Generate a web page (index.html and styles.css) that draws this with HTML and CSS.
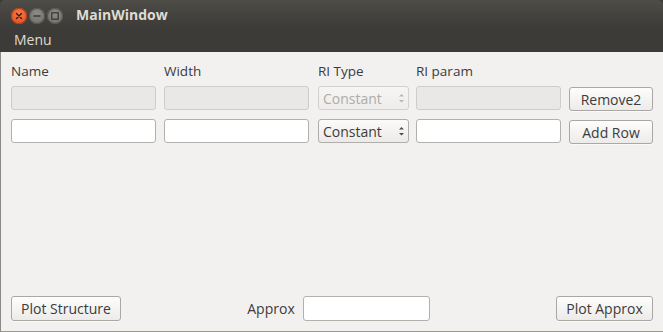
FILE: index.html
```html
<!DOCTYPE html>
<html>
<head>
<meta charset="utf-8">
<link rel="stylesheet" href="styles.css">
</head>
<body>
<div class="window">
  <div class="titlebar">
    <div class="wbtns">
      <span class="wbtn close"><svg width="16" height="16" viewBox="0 0 16 16"><path d="M5.5 5.5 L10.5 10.5 M10.5 5.5 L5.5 10.5" stroke="#3a1a0e" stroke-width="1.4" stroke-linecap="round"/></svg></span>
      <span class="wbtn"><svg width="16" height="16" viewBox="0 0 16 16"><path d="M4.5 8 H11.5" stroke="#3c3b37" stroke-width="1.5"/></svg></span>
      <span class="wbtn"><svg width="16" height="16" viewBox="0 0 16 16"><rect x="4.8" y="4.8" width="6.4" height="6.4" fill="none" stroke="#3c3b37" stroke-width="1.3"/></svg></span>
    </div>
    <span class="title">MainWindow</span>
  </div>
  <div class="menubar"><span class="menu">Menu</span></div>
  <div class="content">
    <div class="grid">
      <div class="lbl">Name</div>
      <div class="lbl">Width</div>
      <div class="lbl">RI Type</div>
      <div class="lbl">RI param</div>
      <div></div>

      <div><div class="input wide disabled"></div></div>
      <div><div class="input wide disabled"></div></div>
      <div><div class="combo disabled"><span>Constant</span><span class="arrows"><svg width="7" height="12" viewBox="0 0 7 12"><path d="M1 4.5 L3.5 2 L6 4.5Z M1 8 L3.5 10.5 L6 8Z" fill="#b9b7b4"/></svg></span></div></div>
      <div><div class="input wide disabled"></div></div>
      <div><button class="btn row-btn">Remove2</button></div>

      <div><div class="input wide"></div></div>
      <div><div class="input wide"></div></div>
      <div><div class="combo"><span>Constant</span><span class="arrows"><svg width="7" height="12" viewBox="0 0 7 12"><path d="M1 4.5 L3.5 2 L6 4.5Z M1 8 L3.5 10.5 L6 8Z" fill="#4c4c4c"/></svg></span></div></div>
      <div><div class="input wide"></div></div>
      <div><button class="btn row-btn">Add Row</button></div>
    </div>
    <div class="spacer"></div>
    <div class="bottom">
      <button class="btn plot-structure">Plot Structure</button>
      <div class="approx">
        <span class="approx-lbl">Approx</span>
        <div class="input approx-input"></div>
      </div>
      <button class="btn plot-approx">Plot Approx</button>
    </div>
  </div>
</div>
</body>
</html>
```

FILE: styles.css
```css
html, body {
  margin: 0;
  padding: 0;
  background: #3c3b37;
}
body {
  width: 663px;
  height: 332px;
  overflow: hidden;
  font-family: "Open Sans", "DejaVu Sans", sans-serif;
}
.window {
  width: 663px;
  height: 332px;
  display: flex;
  flex-direction: column;
  background: #3c3b37;
  border-radius: 5px 5px 0 0;
  overflow: hidden;
}
.titlebar {
  height: 30px;
  display: flex;
  align-items: center;
  background: linear-gradient(#4f4d48 0%, #43423e 50%, #3c3b37 100%);
  padding-left: 11px;
}
.wbtns {
  display: flex;
  gap: 2px;
  margin-top: 1px;
}
.wbtn {
  width: 16px;
  height: 16px;
  border-radius: 50%;
  background: radial-gradient(circle at 50% 35%, #8c8b86, #6c6b66);
  box-shadow: inset 0 0 0 1px #55544f;
  display: block;
}
.wbtn svg { display: block; }
.wbtn.close {
  background: radial-gradient(circle at 50% 35%, #f57a4d, #df4a17);
  box-shadow: inset 0 0 0 1px #b83d12;
}
.title {
  margin-left: 13px;
  color: #dfdbd2;
  font-weight: bold;
  font-size: 14px;
  margin-top: -2px;
}
.menubar {
  height: 22px;
  display: flex;
  align-items: center;
  padding-left: 14px;
}
.menu {
  color: #dfdbd2;
  font-size: 14px;
  margin-top: -3px;
}
.content {
  flex: 1;
  background: #f2f1f0;
  border-left: 1px solid #8b8a86;
  border-bottom: 1px solid #9a9994;
  display: flex;
  flex-direction: column;
  padding: 8px 0 9px 10px;
  color: #3c3c3c;
  font-size: 13px;
}
.grid {
  display: grid;
  grid-template-columns: 153px 154px 98px 153px 84px;
  grid-template-rows: 26px 33px 24px;
  align-items: start;
}
.lbl {
  font-size: 13.5px;
  color: #3c3c3c;
  line-height: 22px;
}
.input {
  height: 22px;
  border: 1px solid #b3b1ae;
  border-radius: 3px;
  background: #ffffff;
  box-sizing: content-box;
}
.input.wide { width: 143px; }
.input.disabled {
  background: #e9e8e7;
  border-color: #cfcdca;
}
.combo {
  height: 22px;
  border: 1px solid #b0aeab;
  border-radius: 3px;
  background: linear-gradient(#fbfbfa, #eceae8);
  display: flex;
  align-items: center;
  justify-content: space-between;
  padding: 0 0 0 4px;
  box-sizing: content-box;
  font-size: 14px;
  color: #3c3c3c;
  width: 85px;
}
.combo .arrows {
  width: 14px;
  display: flex;
  justify-content: center;
}
.combo .arrows svg { display: block; }
.combo.disabled {
  color: #aeaca9;
  border-color: #d3d1ce;
  background: linear-gradient(#f6f5f4, #eeedeb);
}
.btn {
  font-family: "Open Sans", "DejaVu Sans", sans-serif;
  font-size: 14px;
  color: #3c3c3c;
  height: 24px;
  border: 1px solid #aaa8a5;
  border-radius: 3px;
  background: linear-gradient(#fdfdfc, #ecebe9);
  padding: 0;
  box-sizing: border-box;
  display: flex;
  align-items: center;
  justify-content: center;
  box-shadow: 0 1px 0 rgba(255,255,255,0.6);
}
.row-btn {
  width: 84px;
  margin-top: 1px;
}
.spacer { flex: 1; }
.bottom {
  display: grid;
  grid-template-columns: 110px 1fr auto 1fr 97px;
  align-items: center;
  margin-right: 10px;
  margin-bottom: 1px;
}
.plot-structure {
  width: 110px;
  height: 25px;
  grid-column: 1;
}
.approx {
  grid-column: 3;
  display: flex;
  align-items: center;
}
.approx-lbl {
  font-size: 14px;
  margin-right: 8px;
}
.approx-input {
  width: 125px;
  height: 23px;
}
.plot-approx {
  grid-column: 5;
  width: 97px;
  height: 25px;
}
```
